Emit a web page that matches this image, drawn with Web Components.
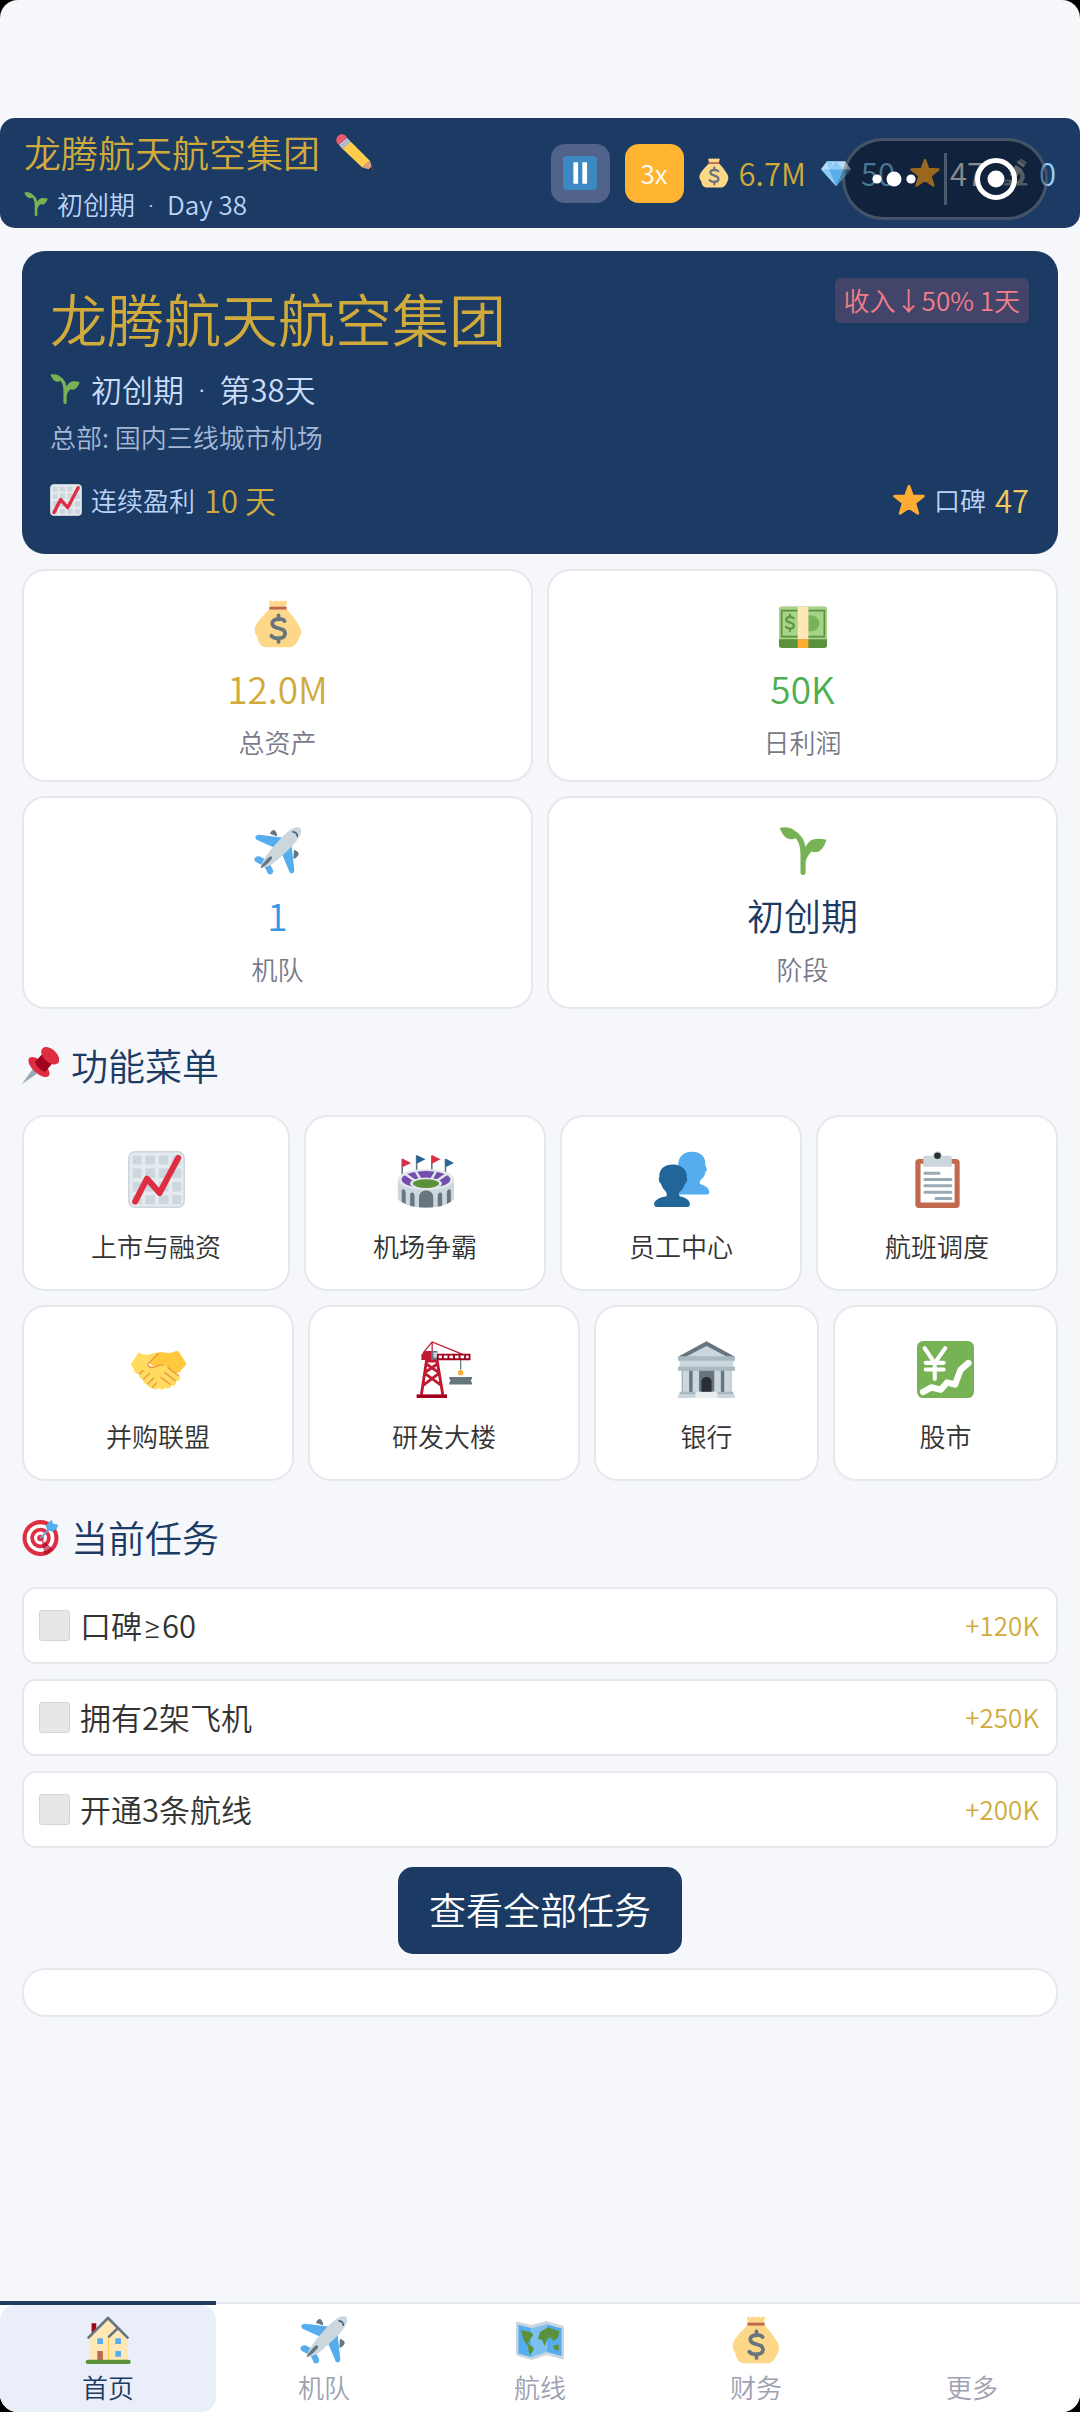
<!DOCTYPE html>
<html lang="zh-CN">
<head>
<meta charset="utf-8">
<meta name="viewport" content="width=device-width, initial-scale=1">
<title>龙腾航天航空集团</title>
<style>
  :root {
    --navy: #1b3a64;
    --gold: #d0ab3c;
    --page: #f5f7fb;
    --line: #e5e8ed;
    --ice: #bcd3f8;
    --latin: Roboto, "Noto Sans", sans-serif;
  }
  html { background: #000; }
  body {
    margin: 0;
    font: 350 26px/38px "Noto Sans CJK SC", "Noto Sans", sans-serif;
    color: #333;
  }
</style>
</head>
<body>
<game-app></game-app>

<script>
const ICONS = {
  bag: `<path fill="#fdd888" d="M11 1.200l1.600-.8 1.600.9 1.800-1 2 .9 2-.9 1.800 1 1.600-.9L25 1.200 23.600 6c3.600 3.600 7.900 9 10 13 2 3 2.300 6 .3 9.500-1.700 3.800-3.500 7-7.500 7h-17c-4 0-6.200-3-6.700-7.500C.3 25-.3 22 1.600 18.500 4 14.500 9 9.500 12.300 6z"/><path fill="#bf6952" d="M11.500 5h13v2.200h-13z"/><path fill="none" stroke="#67757f" stroke-width="2.800" stroke-linecap="round" d="M23 15.800c-1.500-2-9-2.600-9.300 1.500-.2 5.200 9.800 2.500 9.600 8-.2 4.200-8 4.300-10.300 1.500M18.400 11.500v3M18.400 28.500v3"/>`,
  star: `<path fill="#ffac33" stroke="#ffac33" stroke-width="3" stroke-linejoin="round" d="M18 2.500l3.900 10.800 12.300.4-9.700 7.500 3.500 11.800L18 26.200 8 33l3.500-11.800-9.700-7.500 12.300-.4z"/>`,
  sprout: `<path fill="#77b255" d="M.5.6C5-.3 9.500.2 12.300 3.200c4.200 2.500 6.800 6.700 7.500 11.500 1.200-1.600 2.200-3 3-3.700 2-2.400 7.500-2.700 12.700-1.400-.8 3.200-2.600 7-5.400 8.500-2 1.100-4.200.9-5.600.3-1.900 2-4.500 5-4.500 8.600v7c0 2.700-3.900 2.700-3.900 0V20.500c0-5-1-9.500-3.800-12.300-1.800 1.400-4.200 1.400-6.300.2C3.500 7 1.700 4 .5.600z"/>`,
  chart: `<rect x=".5" y=".5" width="35" height="35" rx="4" fill="#e4eaee" stroke="#ccd6dd"/><path fill="#ccd6dd" d="M3 3h5.500v5.500H3zM11 3h6v5.500h-6zM19.500 3h6v5.500h-6zM28 3h5.500v5.500H28zM3 11h5.500v6H3zM11 11h6v6h-6zM19.500 11h6v6h-6zM28 11h5.500v6H28zM3 19.500h5.500v6H3zM11 19.500h6v6h-6zM19.500 19.500h6v6h-6zM28 19.500h5.500v6H28zM3 28h5.500v5.500H3zM11 28h6v5.500h-6zM19.500 28h6v5.500h-6zM28 28h5.500v5.500H28z"/><path fill="none" stroke="#dd2e44" stroke-width="3.800" stroke-linecap="round" stroke-linejoin="round" d="M4.500 32L12 17.500l8 9L31.700 4.300"/>`,
  cash: `<rect y="5" width="36" height="31" rx="2" fill="#5c913b"/><path fill="#a6d388" d="M0 7c0-1.500.7-2 2-2h32c1.300 0 2 .5 2 2v22.500H0z"/><path fill="none" stroke="#5c913b" stroke-width="1.200" d="M2 8h32v19.500H2z"/><path fill="#77b255" d="M22 11.500c11-1 11 13 0 12z"/><path fill="#ffe8b6" d="M14 5h8v24.500h-8z"/><path fill="#ffac33" d="M14 29.500h8V36h-8z"/><path fill="none" stroke="#5c913b" stroke-width="1.500" stroke-linecap="round" d="M11 13.800c-1-1.500-5.500-1.500-5.600.8-.1 3 5.900 1.500 5.800 4.700-.1 2.700-4.700 2.500-6 .8M8.200 11v2M8.200 21.300v2"/>`,
  plane: `<path fill="#66757f" d="M12 5c1-2.500 3-3.500 4-2s2 3 1 4zM30 17c2.500 1 4.500 2.500 3 4.500s-3 2.500-3.500 2z"/><path fill="#55acee" d="M25 8.500L4 5.800C2 5.800.500 7 1.200 8.500c.3 1 1 1.200 2 1.700L18.500 17zM28 12l2.200 20c.2 2-1 3.200-2.500 2.700-1-.3-1.200-1-1.500-2L20 18zM9 24.500L4 22C2 21.500-.2 23 .4 25c.3 1 1 1.200 2 1.800L7 29zM11.500 27l2.700 5c.6 2-.7 4-2.700 3.500-1-.3-1.300-1-1.700-2L7.500 29z"/><path fill="#ccd6dd" d="M5.500 30.500c-.5-3 3.500-9 8-14.500C19 9.500 26 1.800 31 .400c2-.6 3.500 0 4 .8.700 1.500.6 3-.2 4.700C32 12 25 18 19 23.500 13.500 28.500 9 31 5.500 30.500z"/><path fill="#66757f" d="M4.800 31c1-3 4-6 6.500-8.500 1.500-1.300 3 0 2 1.500-2.300 3-5.500 6-8.500 7z"/><path fill="none" stroke="#46637a" stroke-width="1.300" stroke-linecap="round" d="M29.300 3.700c2 .2 3 1.200 3.200 3.200"/>`,
  pin: `<path fill="#99aab5" d="M0 36l10.500-14.500 4.500 4z"/><ellipse cx="16.500" cy="19.500" rx="12.800" ry="6" fill="#dd2e44" transform="rotate(43 16.500 19.500)"/><path fill="#a0041e" d="M12.500 14.500L20 6.500l10 9-7.500 8.500c-4-1-8.500-5-10-9.500z"/><ellipse cx="27.500" cy="8.500" rx="10.500" ry="6.300" fill="#dd2e44" transform="rotate(43 27.500 8.500)"/>`,
  stadium: `<path stroke="#67757f" stroke-width="1" d="M3.300 5v10M12.400 2.800V14M22 2.800V14M30.600 5v10"/><path fill="#dd2e44" d="M3.300 4.800L9 7.500l-5.700 2.700zM22 2.500l5.500 2.700L22 8z"/><path fill="#226699" d="M12.400 2.500L18 5.200 12.400 8zM30.600 4.800L36 7.500l-5.400 2.700z"/><path fill="#ccd6dd" d="M.5 18v12C2 33.500 10 35.800 18.300 35.800S34.500 33.500 36 30V18z"/><ellipse cx="18.300" cy="18" rx="17.800" ry="6.700" fill="#e1e8ed"/><ellipse cx="18.300" cy="18" rx="15.400" ry="5.300" fill="#744eaa"/><path stroke="#e1e8ed" stroke-width="1.500" d="M4.500 14l7 5M11.500 12.300l3 5M25 12.300l-3 5M32 14l-7 5"/><ellipse cx="18.300" cy="20.600" rx="10" ry="3.800" fill="#e1e8ed"/><ellipse cx="18.300" cy="20.600" rx="8.300" ry="2.700" fill="#5c913b"/><path fill="#67757f" d="M13.900 35.500v-6c0-6 9-6 9 0v6c-3 .3-6 .3-9 0zM8.300 27c1-1.500 2.800-.7 2.800 1.500v6.700l-2.800-.7zM3 24.600c1-1 2.500-.2 2.500 2v6.800L3 32zM28.500 27c-1-1.500-2.800-.7-2.800 1.500v6.700l2.800-.7zM34 24.600c-1-1-2.500-.2-2.500 2v6.800L34 32z"/>`,
  people: `<path fill="#55acee" d="M16 10C15.500 4 19 .5 24.500.5s8.800 3 8.500 8l1 3c.3 1-.8 1.300-1 2-.3 2.700-2 3.500-3 5-.8 1.500-.8 2 .2 2.500 3 1 5.300 2.500 5.300 5 0 1-.5 1.500-1.500 1.500H17z"/><path fill="#226699" d="M8.500 28.500c.5-1.500 0-2.500-1-3.500-1.500-1.500-2-3-2.500-4.500-1-.5-1.800-3-1-4C3.800 11.500 7 8.500 12.600 8.500s9 3.500 8.700 8c.8 1 0 3.500-1 4-.5 1.500-1 3-2.500 4.500-1 1-1.500 2-1 3.500 4 .7 6.500 2.500 6.500 5 0 1.200-.6 1.900-1.700 1.900H2.400C1.300 35.400.700 34.700.700 33.500c0-2.500 3.800-4.500 7.800-5z"/>`,
  clipboard: `<rect x="4" y="5" width="28" height="31" rx="2.300" fill="#c1694f"/><path fill="#fff" d="M7.300 8h21.500v24.500H7.300z"/><circle cx="18" cy="3" r="2.900" fill="#ccd6dd"/><path fill="#ccd6dd" d="M9 4.500C9 3.500 9.500 3 10.500 3h15c1 0 1.500.5 1.500 1.500V10H9z"/><circle cx="18" cy="3" r="2.100" fill="#292f33"/><path stroke="#99aab5" stroke-width="1.900" stroke-linecap="round" d="M10 14h9M10 18h16.500M10 22h16.500M10 26h16.500M17 30h9.500"/>`,
  handshake: `<path fill="#ffc83d" d="M17 7.500c3-1 6 .5 8 0 2-.4 3.500-1 5.500-1.200L35.500 14c.5 1.500-3 3-3.700 5.500L24 22 12 14z"/><path fill="#ffdc5d" d="M.5 15L5.300 7.200c3 1.600 5.500 1.800 8 .8 1.500-.6 3-.9 4.500-.4l-6.500 6c-1.500 1.700 1 3.700 4 2.600 2.500-.9 4.500-2 6.200-1.300l9.300 6.600c2 2 0 4.500-2 3.700 1 2-1.200 4-3 2.700.3 2-2.300 2.700-3.800 1.400-.5 1.600-2.800 1.500-4 .4-1 1.200-3 1-3.800-.3-1.700.5-3-.5-3-2.200-1.900.3-3.300-1-2.700-3-2 .2-3.500-1.500-2.500-3.500-2.200.3-3.700-1-3.500-3z"/><path fill="none" stroke="#ef9645" stroke-width=".9" stroke-linecap="round" stroke-linejoin="round" d="M21 15.200c-2.500-.8-4.500 1.500-7 1.500-2.200 0-3.300-1.500-2.200-2.800l6-6M24 16.800l6.500 5M22 20l6.500 5M19.500 23l6 4.500M6 20.700l2.200-2M8.500 24.200l3.800-3.700M11.200 27.200l3.800-3.900M14.200 29.300l2.500-2.800"/>`,
  crane: `<path fill="none" stroke="#be1931" stroke-width=".8" d="M4.500 7.500L10.200.6 29.500 8.500M10.200.6V8"/><path fill="#be1931" d="M3.400 8.500L6 6.300h5V12H3.400z"/><path fill="#67757f" d="M9.500 6.300h4V12h-4z"/><path fill="#ccd6dd" d="M11 7.200h2.200v3.300H11z"/><path fill="#fff" stroke="#a0041e" stroke-width="1.200" d="M13.800 8.600h20v2.900h-20zM17 8.500v3M20.500 8.500v3M24 8.500v3M27.500 8.500v3M31 8.500v3"/><path fill="none" stroke="#be1931" stroke-width="1.800" d="M6.700 12L3.400 34M13.300 12l3.600 22M6.500 14.500l8 5.500M13.500 14.500l-8 5.500M5.500 20.500L16 28M14.500 20.500L4.500 28M6.700 12.700h6.600"/><path fill="#a0041e" d="M.4 33.700h19.200V36H.4z"/><path stroke="#67757f" stroke-width=".8" d="M28.200 12v6"/><circle cx="28.200" cy="20" r="1.700" fill="#ffac33"/><path fill="#67757f" d="M21 22.700h14.400v1L34.600 25l.8 1.500v1H21v-1l.8-1.500-.8-1.300z"/>`,
  bank: `<path fill="#66757f" d="M18 .2L36 10H0z"/><path fill="#ccd6dd" d="M18 3.200L31 10H5z"/><path fill="#99aab5" d="M2.300 18h31.500v15H2.300z"/><path fill="#66757f" d="M7 18.500h2.300V33H7zM13.200 18.500H23V33h-9.800zM27 18.500h2.300V33H27z"/><path fill="#ccd6dd" d="M3 18.500h4V33H3zM9.300 18.500h4V33h-4zM23 18.500h4V33h-4zM29.300 18.500h4V33h-4zM1 12h34v5H1z"/><path fill="#aab8c2" d="M0 9.800h36v2.700H0zM0 16.300h36v2.500H0zM1 32h34v2H1z"/><path fill="#ccd6dd" d="M0 34h36v2H0z"/><path fill="#e9eef1" d="M11 32h14v4H11z"/><path fill="#292f33" d="M14.800 32v-6.300c0-4 6.400-4 6.400 0V32z"/>`,
  yen: `<rect width="36" height="36" rx="4" fill="#77b255"/><path fill="none" stroke="#fff" stroke-width="2.600" stroke-linecap="round" d="M4.800 4.500L11.200 14l6.600-9.500M11.200 14v10M5.500 13.800h11.300M5.500 18h11.300"/><path fill="none" stroke="#fff" stroke-width="4" stroke-linecap="round" stroke-linejoin="round" d="M3.800 32.200L9 29.300l6 1.500 4-4.600 5 1.300 3.500-9.300 5-4.300"/>`,
  target: `<circle cx="18" cy="18.500" r="17.500" fill="#dd2e44"/><circle cx="18" cy="18.500" r="13.500" fill="#fff"/><circle cx="18" cy="18.500" r="10" fill="#dd2e44"/><circle cx="18" cy="18.500" r="6.300" fill="#fff"/><circle cx="18" cy="18.500" r="3.200" fill="#dd2e44"/><path fill="#a0041e" opacity=".6" d="M19 20l11 9c-2 3-5 5-8 6z"/><path stroke="#66a9d8" stroke-width="1.800" stroke-linecap="round" d="M18.500 18L29 7.500"/><path fill="#55acee" d="M24.500 11L23 6.500 28.500.7l2 3.800 4.800 1.200-1.300 3.600-4.500 3.200z"/>`,
  house: `<path fill="#a0041e" d="M5.700 5.500h3.500V14H5.700z"/><path fill="#ffe8b6" d="M4 16L18 2l14.700 14v17.500H4z"/><path fill="#ffcc4d" d="M17.900 15h.9v18.500h-.9z"/><path fill="none" stroke="#66757f" stroke-width="2" stroke-linecap="round" stroke-linejoin="round" d="M3.400 16.200L18 1.500l14.700 14.700M18.800 15.500L25.500 9"/><path fill="#55acee" d="M10 16.700h4.200V21H10zM23.500 16.700h4.200V21h-4.200zM23.500 26.300h4.200v4.300h-4.200z"/><path fill="#c1694f" d="M10 26.300h4.200V33H10z"/><rect x="1.300" y="32.800" width="33.700" height="3.200" rx="1.500" fill="#5c913b"/>`,
  map: `<path fill="#ccd6dd" d="M1 4.300L11.500 6.800 23 3.800l12 3.500c.6.200 1 .6 1 1.200v23c0 .8-.6 1.200-1.400 1L23 29.200 12 33 1.400 30c-.9-.3-1.400-.8-1.400-1.600V5c0-.6.400-.8 1-.7z"/><path fill="#55acee" d="M1.800 6.500l9.700 2.700V31L1.800 28.200zM23 6.200l11.200 3.200V30L23 27z"/><path fill="#7cc0f2" d="M11.500 9.200L23 6.200V27l-11.500 4z"/><path fill="#5c913b" d="M3.500 10.500l7.500 1.500 2 2-2.500 4-1.500 3 3 1.500 1.500 2-2.500 5-1.500-3-.5-4-3-4zM18 12l6-3.500 8.500 3-1 4.500-3 3-3-3-2 1-2 5.500-2-4.500-3-1zM28 22l4-.5v4.500l-3.500-1z"/>`,
  gem: `<path fill="#bdddf4" d="M7 4h22l7 9.500L18 33.500 0 13.500z"/><path fill="#8ccaf7" d="M0 13.500h9.500L18 33.500zM9.500 13.500L7 4l8 0z"/><path fill="#5dadec" d="M9.500 13.500h17L18 33.500z"/><path fill="#8ccaf7" d="M18 4l8.500 9.500h-17z"/><path fill="#4289c1" d="M26.500 13.500H36L18 33.500z"/>`,
  scope: `<path fill="#8a97a0" d="M6 33c-.6-1.500.5-3 2.500-3H12v-2.500h10c4-1.500 5-7 1.500-10.500l3-3.500c6 4.500 5.500 13 1 16.500H32c2 0 2.600 1.500 2 3z"/><path fill="#99aab5" d="M23.500 2.300l8 5.800-2 3.400-8-5.700zM20 8l8 5.700L19.500 25l-6.800-5z"/><path fill="#8a97a0" d="M26.500.5l7 5-1.500 2-7-5zM7 26h13v2.300H7z"/>`,
  pencil: `<path fill="#ea596e" d="M1.500 9.500C-.5 7 0 3.500 2.500 1.500S8 0 10 2.500l.8 1.300-7.800 7z"/><path fill="#ccd6dd" d="M3 10.800l7.800-7 3.700 4-7.800 7z"/><path fill="none" stroke="#99aab5" stroke-width="1.200" d="M4.300 12.200l7.800-7M5.700 13.700l7.700-7"/><path fill="#ffcc4d" d="M6.500 14.700l8-7.200L33 26l-7.500 6.500z"/><path fill="#d99e82" d="M25.500 32.500L33 25.500 35.800 35.600z"/><path fill="#292f33" d="M31.500 34.700l3-3 1.300 4.200z"/>`,
  pause: `<rect width="36" height="36" rx="4" fill="#3b88c3"/><path fill="#fff" d="M11 6.500h5v23h-5zM20.500 6.500h5v23h-5z"/>`,
  none: ``
};

const define = (tag, css, html) => customElements.define(tag, class extends HTMLElement {
  constructor() {
    super();
    const t = document.createElement('template');
    const markup = typeof html === 'function' ? html(this) : html;
    t.innerHTML = `<style>:host,*{box-sizing:border-box}${css}</style>${markup}`;
    this.attachShadow({ mode: 'open' }).append(t.content.cloneNode(true));
  }
});

define('game-icon', `
  :host{display:inline-flex;flex:none;width:var(--size,32px);height:var(--size,32px)}
  svg{width:100%;height:100%;display:block}`,
  el => `<svg viewBox="0 0 36 36" aria-hidden="true">${ICONS[el.getAttribute('name')]}</svg>`);

define('resource-count', `
  :host{display:flex;align-items:center;gap:10px;font-size:31px;line-height:44px;--size:30px}`,
  el => `<game-icon name="${el.getAttribute('icon')}"></game-icon><span><slot></slot></span>`);

define('system-capsule', `
  :host{display:block;position:absolute;top:20px;right:32px;width:206px;height:82px}
  .box{height:100%;border:3px solid rgba(255,255,255,.22);border-radius:41px;
    background:rgba(0,0,0,.4);display:flex;align-items:center}
  button{flex:1;height:100%;border:0;padding:0;background:none;display:flex;align-items:center;justify-content:center}
  i{width:3px;height:52px;background:rgba(255,255,255,.25)}`,
  `<div class="box">
    <button aria-label="更多操作"><svg width="44" height="16" viewBox="0 0 44 16" fill="#fff"><circle cx="5" cy="8" r="4.600"/><circle cx="22" cy="8" r="7.500"/><circle cx="39" cy="8" r="4.600"/></svg></button>
    <i></i>
    <button aria-label="关闭"><svg width="44" height="44" viewBox="0 0 44 44"><circle cx="22" cy="22" r="18.500" fill="none" stroke="#fff" stroke-width="5"/><circle cx="22" cy="22" r="8.500" fill="#fff"/></svg></button>
  </div>`);

define('top-bar', `
  :host{display:flex;position:relative;align-items:center;justify-content:space-between;
    height:110px;padding:0 24px;border-radius:15px;background:var(--navy)}
  .left{display:flex;flex-direction:column;gap:3px;padding-top:5px}
  .name{display:flex;align-items:center;gap:16px;margin:0;font-size:37px;line-height:54px;font-weight:inherit;color:var(--gold);--size:37px}
  .day{display:flex;align-items:center;gap:9px;line-height:44px;color:var(--ice);--size:24px}
  .day i{margin:0 7px;font-family:var(--latin);font-style:normal;line-height:1}
  .right{display:flex;align-items:center;gap:15px}
  button{border:0;padding:0;font:inherit;background:none;display:flex;align-items:center;justify-content:center}
  .sq{width:59px;height:59px;border-radius:14px;color:#fff}
  .pause{background:#51638a;--size:34px}
  .speed{background:#ffb432}`,
  `<div class="left">
    <h1 class="name">龙腾航天航空集团<button aria-label="改名"><game-icon name="pencil"></game-icon></button></h1>
    <div class="day"><game-icon name="sprout"></game-icon><span>初创期 <i>·</i> Day 38</span></div>
  </div>
  <div class="right">
    <button class="sq pause" aria-label="暂停"><game-icon name="pause"></game-icon></button>
    <button class="sq speed">3x</button>
    <resource-count icon="bag" style="color:var(--gold)">6.7M</resource-count>
    <resource-count icon="gem" style="color:#7cc8f5">50</resource-count>
    <resource-count icon="star" style="color:#e8e8ec">47</resource-count>
    <resource-count icon="scope" style="color:#90d0ff">0</resource-count>
  </div>
  <system-capsule></system-capsule>`);

define('company-card', `
  :host{display:block;padding:27px 29px 32px 28px;border-radius:23px;background:var(--navy);color:var(--ice)}
  .top,.foot{display:flex;justify-content:space-between;align-items:flex-start}
  h2{margin:0;font-size:57px;line-height:78px;font-weight:inherit;color:var(--gold)}
  .tag{padding:3px 9px 5px;border-radius:6px;background:#43446a;color:#f27f88;line-height:37px}
  .stage{display:flex;align-items:center;gap:11px;margin-top:9px;font-size:31px;line-height:48px;color:#cbdcf8;--size:30px}
  .stage i{margin:0 7px;font-family:var(--latin);font-style:normal;line-height:1}
  .base{margin-top:4px;line-height:40px;color:#a5b7d5}
  .foot{margin-top:21px;line-height:44px}
  .foot div{display:flex;align-items:center;gap:9px}
  b{font-size:31px;font-weight:inherit}`,
  `<div class="top"><h2>龙腾航天航空集团</h2><span class="tag">收入↓50% 1天</span></div>
  <div class="stage"><game-icon name="sprout"></game-icon><span>初创期 <i>·</i> 第38天</span></div>
  <div class="base">总部: 国内三线城市机场</div>
  <div class="foot">
    <div><game-icon name="chart"></game-icon><span>连续盈利</span><b style="color:var(--gold)">10 天</b></div>
    <div><game-icon name="star"></game-icon><span>口碑</span><b style="color:#f2c95c">47</b></div>
  </div>`);

define('stat-card', `
  :host{display:flex;flex-direction:column;align-items:center;padding:29px 12px 19px;
    border:2px solid var(--line);border-radius:23px;background:#fff;--size:48px}
  .value{margin-top:12px;font-size:37px;line-height:56px}
  .label{margin-top:7px;color:#787a8a}`,
  el => `<game-icon name="${el.getAttribute('icon')}"></game-icon>
  <div class="value"><slot></slot></div><div class="label">${el.getAttribute('label')}</div>`);

define('section-title', `
  :host{display:block;margin:28px 0 22px}
  h2{display:flex;align-items:center;gap:12px;margin:0;font-size:37px;line-height:56px;font-weight:inherit;color:var(--navy);--size:37px}`,
  el => `<h2><game-icon name="${el.getAttribute('icon')}"></game-icon><slot></slot></h2>`);

define('menu-card', `
  :host{display:flex;flex:1 1 auto}
  button{flex:1;display:flex;flex-direction:column;align-items:center;padding:34px 20px 24px;gap:19px;
    border:2px solid var(--line);border-radius:23px;background:#fff;color:inherit;font:inherit;--size:57px}`,
  el => `<button><game-icon name="${el.getAttribute('icon')}"></game-icon><span><slot></slot></span></button>`);

define('task-row', `
  :host{display:flex;align-items:center;justify-content:space-between;padding:14px 17px 15px 15px;
    border:2px solid var(--line);border-radius:14px;background:#fff}
  label{display:flex;align-items:center;gap:10px;font-size:31px;line-height:44px}
  input{appearance:none;width:31px;height:31px;margin:0;border:1px solid #d3d5d7;border-radius:3px;background:#e6e7e8}
  .reward{color:var(--gold)}`,
  el => `<label><input type="checkbox"><span><slot></slot></span></label><span class="reward">${el.getAttribute('reward')}</span>`);

define('tab-item', `
  :host{flex:1;display:flex;margin-top:-3px;border-top:4px solid transparent}
  :host([current]){border-color:#223c5f}
  a{flex:1;display:flex;flex-direction:column;align-items:center;gap:4px;padding:11px 0 6px;border-radius:15px;
    color:#9ea2b0;text-decoration:none;--size:48px}
  :host([current]) a{background:#e9eef9;color:var(--navy)}`,
  el => `<a href="#${el.id}"><game-icon name="${el.getAttribute('icon')}"></game-icon><span><slot></slot></span></a>`);

define('game-app', `
  :host{display:flex;flex-direction:column;min-height:100vh;background:var(--page);border-radius:18px;overflow:hidden;padding-top:118px}
  main{flex:1;padding:23px 22px}
  .stats{display:grid;grid-template-columns:1fr 1fr;gap:14px;margin-top:15px}
  .menus{display:grid;gap:14px}
  .menu{display:flex;gap:14px}
  .tasks{display:flex;flex-direction:column;gap:15px}
  .tasks i{margin:0 2px;font-family:var(--latin);font-style:normal;line-height:1}
  .all{display:block;margin:19px auto 14px;padding:15px 31px 18px;border:0;border-radius:15px;
    background:var(--navy);color:#fff;font:inherit;font-size:37px;line-height:54px}
  .empty{height:49px;border:2px solid var(--line);border-radius:23px;background:#fff}
  nav{display:flex;border-top:2px solid var(--line);background:#fff}`,
  `<top-bar></top-bar>
  <main>
    <company-card></company-card>
    <div class="stats">
      <stat-card icon="bag" label="总资产" style="color:var(--gold)">12.0M</stat-card>
      <stat-card icon="cash" label="日利润" style="color:#4caf50">50K</stat-card>
      <stat-card icon="plane" label="机队" style="color:#3498e4">1</stat-card>
      <stat-card icon="sprout" label="阶段" style="color:var(--navy)">初创期</stat-card>
    </div>
    <section-title icon="pin">功能菜单</section-title>
    <div class="menus">
      <div class="menu">
        <menu-card icon="chart">上市与融资</menu-card>
        <menu-card icon="stadium">机场争霸</menu-card>
        <menu-card icon="people">员工中心</menu-card>
        <menu-card icon="clipboard">航班调度</menu-card>
      </div>
      <div class="menu">
        <menu-card icon="handshake">并购联盟</menu-card>
        <menu-card icon="crane">研发大楼</menu-card>
        <menu-card icon="bank">银行</menu-card>
        <menu-card icon="yen">股市</menu-card>
      </div>
    </div>
    <section-title icon="target">当前任务</section-title>
    <div class="tasks">
      <task-row reward="+120K">口碑<i>≥</i>60</task-row>
      <task-row reward="+250K">拥有2架飞机</task-row>
      <task-row reward="+200K">开通3条航线</task-row>
    </div>
    <button class="all">查看全部任务</button>
    <div class="empty"></div>
  </main>
  <nav>
    <tab-item id="home" icon="house" current>首页</tab-item>
    <tab-item id="fleet" icon="plane">机队</tab-item>
    <tab-item id="routes" icon="map">航线</tab-item>
    <tab-item id="finance" icon="bag">财务</tab-item>
    <tab-item id="more" icon="none">更多</tab-item>
  </nav>`);
</script>
</body>
</html>
